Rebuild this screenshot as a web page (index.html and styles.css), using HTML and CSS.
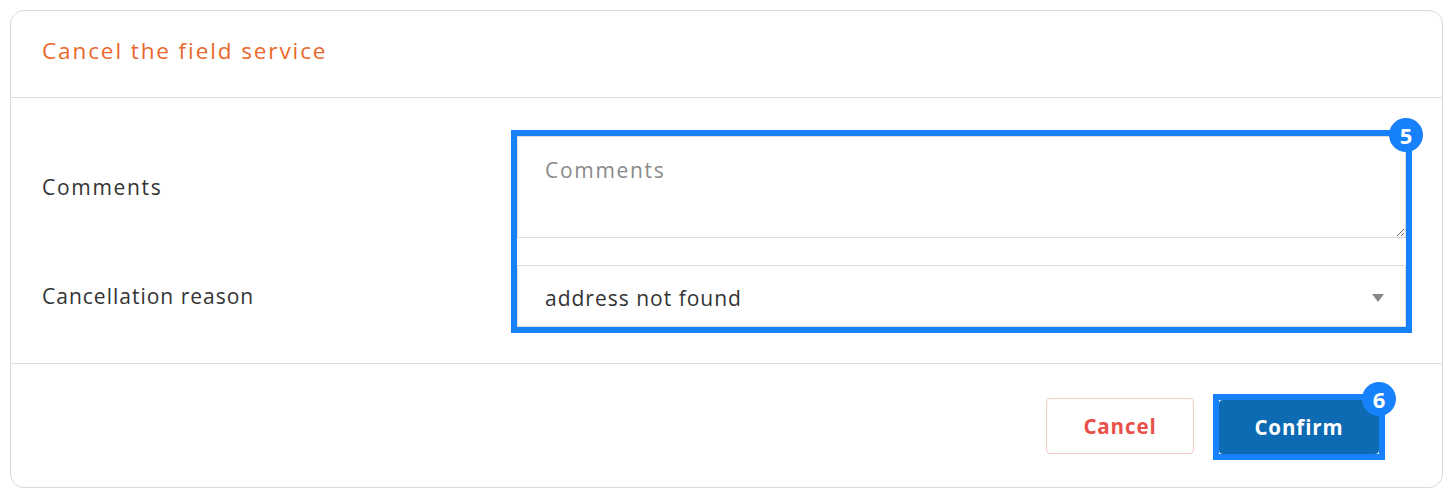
FILE: index.html
```html
<!DOCTYPE html>
<html>
<head>
<meta charset="utf-8">
<link rel="stylesheet" href="styles.css">
</head>
<body>
<div class="card">
  <div class="card-header">
    <h2 class="title">Cancel the field service</h2>
  </div>
  <div class="card-body">
    <div class="labels-and-controls">
      <div class="label">Comments</div>
      <div class="label label-reason">Cancellation reason</div>
      <div class="controls">
        <textarea class="textarea" placeholder="Comments"></textarea>
        <div class="select">
          <span>address not found</span>
          <svg class="caret" width="12" height="8" viewBox="0 0 12 8"><path d="M0 0H12L6 8Z" fill="#888"/></svg>
        </div>
        <div class="highlight"><span class="badge">5</span></div>
      </div>
    </div>
  </div>
  <div class="card-footer">
    <button class="btn btn-cancel">Cancel</button>
    <div class="confirm-wrap">
      <button class="btn btn-confirm">Confirm</button>
      <div class="highlight"><span class="badge">6</span></div>
    </div>
  </div>
</div>
</body>
</html>
```
FILE: styles.css
```css
* { box-sizing: border-box; }
html, body { margin: 0; background: #fff; }
body {
  padding: 10px;
  font-family: "Open Sans", "DejaVu Sans", sans-serif;
  color: #333;
}
.card {
  width: 1433px;
  height: 478px;
  border: 1px solid #d9d9d9;
  border-radius: 14px;
  display: flex;
  flex-direction: column;
}
.card-header {
  height: 87px;
  border-bottom: 1px solid #dedede;
  display: flex;
  align-items: center;
  padding: 0 31px 8px;
}
.title {
  margin: 0;
  font-weight: 400;
  font-size: 22.5px;
  color: #e9682b;
  letter-spacing: 1.9px;
}
.card-body {
  height: 266px;
  border-bottom: 1px solid #dedede;
  padding: 38px 36px 0 31px;
}
.labels-and-controls {
  display: grid;
  grid-template-columns: 475px 1fr;
  grid-template-rows: 102px 62px;
  row-gap: 27px;
}
.label {
  font-size: 21px;
  align-self: center;
  letter-spacing: 1.2px;
  grid-column: 1;
  grid-row: 1;
}
.label:first-child { letter-spacing: 1.7px; }
.label-reason { grid-row: 2; letter-spacing: 1px; }
.controls {
  grid-column: 2;
  grid-row: 1 / span 2;
  position: relative;
  display: grid;
  grid-template-rows: 102px 62px;
  row-gap: 27px;
}
.textarea {
  display: block;
  width: 100%;
  height: 102px;
  border: 1px solid #dcdcdc;
  border-radius: 0;
  padding: 21px 27px;
  font-family: inherit;
  font-size: 21px;
  line-height: 24px;
  letter-spacing: 1.7px;
  color: #333;
  resize: vertical;
  outline: none;
}
.textarea::placeholder { color: #8a8a8a; }
.select {
  border: 1px solid #dcdcdc;
  display: flex;
  align-items: center;
  justify-content: space-between;
  padding: 4px 21px 0 27px;
  font-size: 21px;
  letter-spacing: 1px;
  color: #333;
}
.highlight {
  position: absolute;
  inset: -6px;
  border: 6px solid #1781fb;
  pointer-events: none;
}
.badge {
  position: absolute;
  top: -18px;
  right: -17px;
  width: 34px;
  height: 34px;
  border-radius: 50%;
  background: #1781fb;
  color: #fff;
  font-family: "Open Sans", sans-serif;
  font-weight: 700;
  font-size: 22px;
  line-height: 34px;
  text-align: center;
}
.card-footer {
  flex: 1;
  display: flex;
  justify-content: flex-end;
  align-items: center;
  gap: 25px;
  padding: 0 63px 0 0;
}
.btn {
  font-family: inherit;
  font-weight: 700;
  font-size: 20.5px;
  letter-spacing: 0.9px;
  cursor: pointer;
}
.btn-cancel {
  width: 148px;
  height: 56px;
  background: #fff;
  border: 1px solid #f4c9c5;
  border-radius: 4px;
  color: #e9504a;
}
.confirm-wrap {
  position: relative;
  margin-top: 2px;
}
.btn-confirm {
  display: block;
  width: 160px;
  height: 54px;
  background: #0c6bb2;
  border: none;
  border-radius: 4px;
  color: #fff;
}
```
